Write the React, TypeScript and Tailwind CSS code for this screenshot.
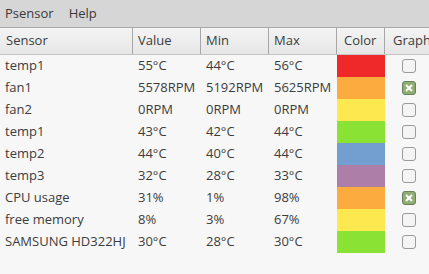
import React from "react";

const rows = [
  ["temp1", "55°C", "44°C", "56°C", "#ef2929", false],
  ["fan1", "5578RPM", "5192RPM", "5625RPM", "#fcac3f", true],
  ["fan2", "0RPM", "0RPM", "0RPM", "#fde84f", false],
  ["temp1", "43°C", "42°C", "44°C", "#8ae234", false],
  ["temp2", "44°C", "40°C", "44°C", "#729fcf", false],
  ["temp3", "32°C", "28°C", "33°C", "#ad7fa8", false],
  ["CPU usage", "31%", "1%", "98%", "#fcac3f", true],
  ["free memory", "8%", "3%", "67%", "#fde84f", false],
  ["SAMSUNG HD322HJ", "30°C", "28°C", "30°C", "#8ae234", false],
] as const;

function Check({ on }: { on: boolean }) {
  if (on)
    return (
      <div className="w-[14px] h-[14px] rounded-[3px] border border-[#6b7f5a] bg-[#8fae75] flex items-center justify-center">
        <svg width="8" height="8" viewBox="0 0 8 8">
          <path d="M1 1L7 7M7 1L1 7" stroke="#fff" strokeWidth="2" />
        </svg>
      </div>
    );
  return <div className="w-[14px] h-[14px] rounded-[3px] border border-[#9a9a9a] bg-[#f4f4f4]" />;
}

export default function App() {
  const cols = "grid grid-cols-[133px_68px_68px_68px_48px_1fr]";
  return (
    <div
      className="w-[429px] h-[274px] bg-[#f7f7f7] text-[#3c3c3c] overflow-hidden text-[13px]"
      style={{ fontFamily: '"Open Sans", "DejaVu Sans", sans-serif' }}
    >
      <div className="h-[28px] bg-[#d6d6d6] border-b border-[#a9a9a9] flex items-center gap-[15px] px-[5px] text-[#3a3a3a]">
        <span>Psensor</span>
        <span>Help</span>
      </div>
      <div className={`${cols} h-[27px] border-b border-[#c4c4c4] bg-gradient-to-b from-[#f4f4f4] to-[#e6e6e6]`}>
        <div className="pl-[6px] flex items-center border-r border-[#a6a6a6]">Sensor</div>
        <div className="pl-[5px] flex items-center border-r border-[#a6a6a6]">Value</div>
        <div className="pl-[5px] flex items-center border-r border-[#a6a6a6]">Min</div>
        <div className="pl-[5px] flex items-center border-r border-[#a6a6a6]">Max</div>
        <div className="pl-[7px] flex items-center border-r border-[#a6a6a6]">Color</div>
        <div className="pl-[8px] flex items-center whitespace-nowrap">Graph</div>
      </div>
      {rows.map((r, i) => (
        <div key={i} className={`${cols} h-[22px]`}>
          <div className="pl-[5px] flex items-center whitespace-nowrap">{r[0]}</div>
          <div className="pl-[5px] flex items-center whitespace-nowrap">{r[1]}</div>
          <div className="pl-[5px] flex items-center whitespace-nowrap">{r[2]}</div>
          <div className="pl-[5px] flex items-center whitespace-nowrap">{r[3]}</div>
          <div style={{ backgroundColor: r[4] }} />
          <div className="flex items-center pl-[17px]">
            <Check on={r[5]} />
          </div>
        </div>
      ))}
    </div>
  );
}
